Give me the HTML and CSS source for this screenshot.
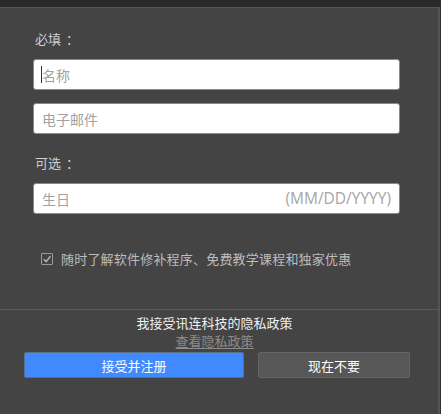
FILE: index.html
```html
<!DOCTYPE html>
<html lang="zh">
<head>
<meta charset="utf-8">
<link rel="stylesheet" href="styles.css">
</head>
<body>
<div class="dialog">
  <div class="topbar"></div>
  <div class="form">
    <div class="label">必填<span class="colon">：</span></div>
    <div class="field-wrap">
      <input class="field" type="text" placeholder="名称">
      <span class="caret"></span>
    </div>
    <input class="field field-gap" type="text" placeholder="电子邮件">
    <div class="label label-opt">可选<span class="colon">：</span></div>
    <div class="field-wrap">
      <input class="field" type="text" placeholder="生日">
      <span class="hint">(MM/DD/YYYY)</span>
    </div>
    <label class="check-row">
      <span class="checkbox">
        <svg width="10" height="10" viewBox="0 0 10 10"><path d="M1.8 5.2 L4.1 7.6 L8.4 2.2" fill="none" stroke="#b5b5b5" stroke-width="1.4"/></svg>
      </span>
      <span class="check-text">随时了解软件修补程序、免费教学课程和独家优惠</span>
    </label>
  </div>
  <div class="footer">
    <div class="privacy">我接受讯连科技的隐私政策</div>
    <a class="link">查看隐私政策</a>
    <div class="buttons">
      <button class="btn btn-primary">接受并注册</button>
      <button class="btn btn-secondary">现在不要</button>
    </div>
  </div>
</div>
</body>
</html>
```

FILE: styles.css
```css
html, body {
  margin: 0;
  padding: 0;
  background: #444444;
}
body {
  font-family: "Noto Sans CJK SC", "Noto Sans", sans-serif;
  width: 441px;
  height: 414px;
  overflow: hidden;
}
.dialog {
  width: 441px;
  height: 414px;
  box-sizing: border-box;
  border-right: 1px solid #2e2e2e;
  box-shadow: inset -2px 0 0 #555555;
  display: flex;
  flex-direction: column;
}
.topbar {
  height: 7px;
  background: #2a2a2a;
  border-bottom: 1px solid #575757;
}
.form {
  height: 301px;
  padding-left: 33px;
  display: flex;
  flex-direction: column;
}
.label {
  font-size: 13px;
  line-height: 20px;
  color: #cfcfcf;
  margin-top: 21px;
  padding-left: 2px;
}
.colon {
  margin-left: 5px;
}
.label-opt {
  margin-top: 19px;
}
.field-wrap {
  position: relative;
  width: 367px;
  margin-top: 10px;
}
.label-opt + .field-wrap {
  margin-top: 10px;
}
.field {
  display: block;
  width: 367px;
  height: 31px;
  box-sizing: border-box;
  border: 1px solid #8a8a8a;
  border-radius: 3px;
  background: #ffffff;
  padding: 0 8px;
  font-family: "Noto Sans CJK SC", "Noto Sans", sans-serif;
  font-size: 14px;
  color: #333;
  outline: none;
}
.field::placeholder {
  color: #a2a2a2;
}
.field-gap {
  margin-top: 13px;
}
.caret {
  position: absolute;
  left: 8px;
  top: 7px;
  width: 1px;
  height: 17px;
  background: #333;
}
.hint {
  position: absolute;
  right: 9px;
  top: 0;
  line-height: 31px;
  font-family: "Open Sans", "Noto Sans", sans-serif;
  font-size: 15.5px;
  color: #a6a6a6;
}
.check-row {
  display: flex;
  align-items: center;
  gap: 8px;
  margin-top: 35px;
  padding-left: 8px;
  height: 20px;
}
.checkbox {
  width: 12px;
  height: 12px;
  box-sizing: border-box;
  border: 1px solid #9a9a9a;
  border-radius: 1px;
  display: flex;
  align-items: center;
  justify-content: center;
}
.checkbox svg {
  display: block;
}
.check-text {
  font-size: 13px;
  color: #bdbdbd;
  line-height: 20px;
  letter-spacing: 0.2px;
}
.footer {
  border-top: 1px solid #5a5a5a;
  display: flex;
  flex-direction: column;
  align-items: center;
  padding-top: 4px;
  padding-right: 11px;
}
.privacy {
  font-size: 13px;
  line-height: 18px;
  color: #f0f0f0;
}
.link {
  font-size: 13px;
  line-height: 18px;
  color: #8c8c8c;
  text-decoration: underline;
  text-underline-offset: 2px;
}
.buttons {
  display: flex;
  gap: 14px;
  margin-top: 2px;
  align-self: flex-start;
  margin-left: 24px;
}
.btn {
  height: 26px;
  box-sizing: border-box;
  border-radius: 2px;
  font-family: "Noto Sans CJK SC", "Noto Sans", sans-serif;
  font-size: 13px;
  color: #ffffff;
  padding: 0;
  cursor: pointer;
}
.btn-primary {
  width: 220px;
  background: #418afe;
  border: 1px solid #5a6e8e;
}
.btn-secondary {
  width: 152px;
  background: #575757;
  border: 1px solid #656565;
}
```
